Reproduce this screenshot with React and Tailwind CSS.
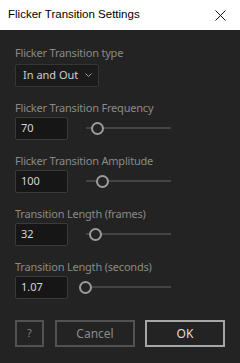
import React from "react";

const font = { fontFamily: '"Noto Sans", "Open Sans", sans-serif' };

function Slider({ pos }) {
  return (
    <div className="relative ml-[11px] h-[23px] w-[92px]">
      <div className="absolute left-[7px] right-0 top-[10px] h-[2px] bg-[#444444]" />
      <div
        className="absolute top-[5px] h-[13px] w-[13px] rounded-full border-2 border-[#9c9c9c] bg-[#232323]"
        style={{ left: pos }}
      />
    </div>
  );
}

function Field({ label, value, pos }) {
  return (
    <div className="mt-[13px]">
      <div className="h-4 text-[11px] leading-4 tracking-[-0.2px] text-[#8a8a8a]">{label}</div>
      <div className="mt-[1px] flex items-center">
        <div className="flex h-[23px] w-[53px] items-center rounded-[2px] border border-[#3a3a3a] bg-[#161616] pl-[5px] text-[11px] text-[#d4d4d4]">
          {value}
        </div>
        <Slider pos={pos} />
      </div>
    </div>
  );
}

export default function App() {
  return (
    <div className="flex h-[363px] w-[240px] flex-col" style={font}>
      {/* Title bar */}
      <div className="flex h-[30px] items-center justify-between bg-white pl-2 pr-[10px]">
        <span className="text-[11.5px] text-black" style={{ fontFamily: '"Liberation Sans", sans-serif' }}>
          Flicker Transition Settings
        </span>
        <svg width="11" height="11" viewBox="0 0 11 11" className="mr-[4px]">
          <path d="M0.5 0.5 L10.5 10.5 M10.5 0.5 L0.5 10.5" stroke="#111" strokeWidth="1" />
        </svg>
      </div>

      {/* Body */}
      <div className="flex-1 bg-[#232323] px-[15px] pt-[15px]">
        <div className="h-4 text-[11px] leading-4 tracking-[-0.2px] text-[#8a8a8a]">Flicker Transition type</div>
        <div className="mt-[3px] flex h-[23px] w-[84px] items-center justify-between rounded-[2px] border border-[#363636] bg-[#1b1b1b] pl-[7px] pr-[6px] text-[11px] text-[#cfcfcf]">
          <span>In and Out</span>
          <svg width="7" height="5" viewBox="0 0 7 5">
            <path d="M0.5 0.5 L3.5 3.5 L6.5 0.5" fill="none" stroke="#a0a0a0" strokeWidth="1" />
          </svg>
        </div>

        <Field label="Flicker Transition Frequency" value="70" pos={12} />
        <Field label="Flicker Transition Amplitude" value="100" pos={17} />
        <Field label="Transition Length (frames)" value="32" pos={10} />
        <Field label="Transition Length (seconds)" value="1.07" pos={0} />

        <div className="mt-[21px] flex gap-[10px]">
          <button className="flex h-[27px] w-[29px] items-center justify-center border-2 border-[#525252] text-[11px] text-[#808080]">
            ?
          </button>
          <button className="ml-[1px] flex h-[27px] w-[80px] items-center justify-center border-2 border-[#525252] text-[12px] text-[#8a8a8a]">
            Cancel
          </button>
          <button className="flex h-[27px] w-[80px] items-center justify-center border-2 border-[#a6a6a6] text-[12px] text-[#dcdcdc]">
            OK
          </button>
        </div>
      </div>
    </div>
  );
}
